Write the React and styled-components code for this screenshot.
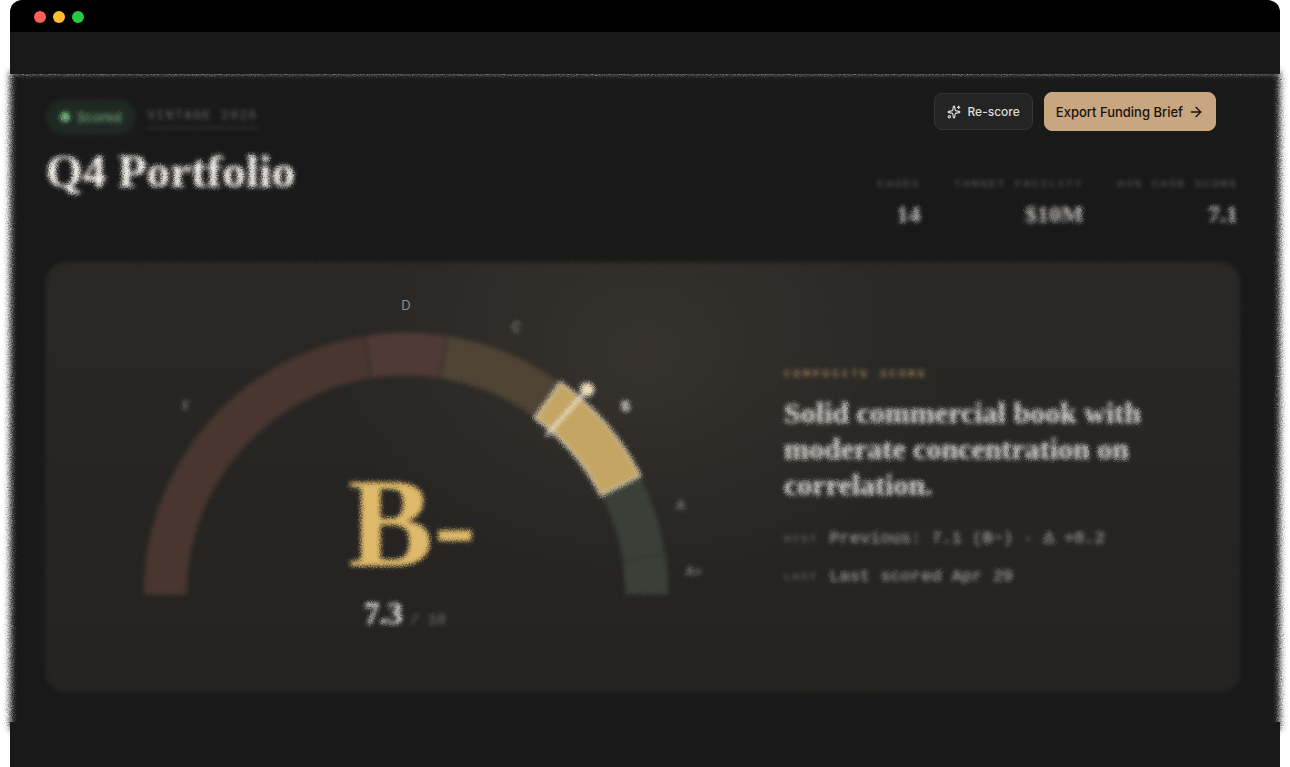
import React from "react";
import styled, { createGlobalStyle } from "styled-components";
import { ArrowRight, Sparkles } from "lucide-react";

const serif = '"Liberation Serif", serif';
const mono = '"Liberation Mono", monospace';
const sans = 'Inter, "Liberation Sans", sans-serif';

const GlobalStyle = createGlobalStyle`
  *, *::before, *::after { box-sizing: border-box; }
  body { margin: 0; background: #fff; font-family: ${sans}; }
  h1, h2, p, dl, dd, dt { margin: 0; }
`;

const Frame = styled.div`
  display: flex;
  flex-direction: column;
  min-height: 100vh;
  margin: 0 10px;
`;

const TitleBar = styled.header`
  display: flex;
  align-items: center;
  gap: 7px;
  height: 32px;
  padding: 2px 24px 0;
  border-radius: 12px 12px 0 0;
  background: #000;
`;

const Light = styled.span`
  width: 12px;
  height: 12px;
  border-radius: 50%;
  background: ${(p) => p.$color};
`;

const Strip = styled.div`
  position: relative;
  z-index: 1;
  height: 42px;
  background: #191919;
`;

const Foot = styled(Strip)`
  flex: 1;
  min-height: 44px;
`;

const Sheet = styled.main`
  position: relative;
  padding: 18px 40px 30px 36px;

  &::before {
    content: "";
    position: absolute;
    inset: -2px 0 -8px;
    background: #191919;
    filter: url(#haze);
  }
`;

const SheetHead = styled.div`
  position: relative;
  display: flex;
  justify-content: space-between;
  height: 170px;
`;

const HeadLeft = styled.div`
  padding-top: 7px;
  filter: url(#scatter);
`;

const TagRow = styled.div`
  display: flex;
  align-items: center;
  gap: 12px;
`;

const Pill = styled.span`
  display: flex;
  align-items: center;
  gap: 7px;
  height: 36px;
  padding: 0 14px;
  border-radius: 18px;
  background: #202823;
  color: #6a9b71;
  font-size: 13px;
  font-weight: 600;

  &::before {
    content: "";
    width: 10px;
    height: 10px;
    border-radius: 50%;
    background: #71b57e;
  }
`;

const Vintage = styled.span`
  border-bottom: 2px dotted #4f4e4d;
  color: #72716f;
  font: 12px/22px ${mono};
  letter-spacing: 2px;
`;

const Title = styled.h1`
  margin-top: 8px;
  color: #faf6f2;
  font: bold 47px/56px ${serif};
`;

const HeadRight = styled.div`
  display: flex;
  flex-direction: column;
  align-items: flex-end;
  justify-content: space-between;
  padding-bottom: 34px;
`;

const Actions = styled.div`
  display: flex;
  align-items: center;
  gap: 11px;
  padding-right: 24px;
`;

const Button = styled.button`
  display: flex;
  align-items: center;
  gap: ${(p) => (p.$primary ? 5 : 6)}px;
  height: ${(p) => (p.$primary ? 39 : 37)}px;
  padding: 0 ${(p) => (p.$primary ? 11 : 12)}px;
  border: 1px solid ${(p) => (p.$primary ? "#c7a680" : "#343434")};
  border-radius: 8px;
  background: ${(p) => (p.$primary ? "#c7a680" : "#242424")};
  color: ${(p) => (p.$primary ? "#17130f" : "#dedbd6")};
  font: 500 ${(p) => (p.$primary ? 13 : 12)}px ${sans};
`;

const Metrics = styled.dl`
  display: flex;
  gap: 34px;
  padding-right: 2px;
  filter: url(#scatter);
`;

const Metric = styled.div`
  text-align: right;

  dt {
    color: #6b6a68;
    font: 11px/16px ${mono};
    letter-spacing: 2px;
  }
  dd {
    margin-top: 8px;
    color: #c9c6c3;
    font: bold 24px/28px ${serif};
  }
`;

const Card = styled.section`
  position: relative;
  display: grid;
  grid-template-columns: 738px minmax(0, 1fr);
  align-items: center;
  min-height: 430px;

  &::before {
    content: "";
    position: absolute;
    inset: 0;
    border: 1px solid #2f2d29;
    border-radius: 20px;
    background:
      radial-gradient(ellipse 300px 230px at 50% 22%, rgba(199, 160, 120, 0.09), transparent),
      linear-gradient(#292826, #242321);
    filter: url(#scatter);
  }
`;

const Gauge = styled.svg`
  position: relative;
  display: block;
  width: 100%;
  height: 430px;
`;

const Summary = styled.div`
  position: relative;
  padding: 0 60px 0 0;
  filter: url(#scatter);
`;

const Eyebrow = styled.p`
  color: #cba66b;
  font: 11px/16px ${mono};
  letter-spacing: 3px;
`;

const Headline = styled.h2`
  max-width: 380px;
  margin: 13px 0 24px;
  color: #e6e2de;
  font: bold 30px/36px ${serif};
`;

const Note = styled.p`
  display: flex;
  align-items: center;
  gap: 11px;
  color: #b5b2ae;
  font: 17px/24px ${mono};

  & + & { margin-top: 14px; }
`;

const NoteTag = styled.span`
  color: #7b7875;
  font-size: 11px;
  letter-spacing: 2px;
`;

const CX = 360;
const CY = 333;
const OUTER = 263;
const INNER = 219;

const at = (score, radius) => {
  const angle = Math.PI * (1 - score / 10);
  return [CX + radius * Math.cos(angle), CY - radius * Math.sin(angle)];
};

const arc = (from, to) =>
  `M${at(from, OUTER)} A${OUTER} ${OUTER} 0 0 1 ${at(to, OUTER)} L${at(to, INNER)} A${INNER} ${INNER} 0 0 0 ${at(from, INNER)}Z`;

const bands = [
  { grade: "F", from: 0, to: 4.5, fill: "#48362f" },
  { grade: "D", from: 4.5, to: 5.5, fill: "#4f3a38" },
  { grade: "C", from: 5.5, to: 7, fill: "#4e4334" },
  { grade: "A", from: 8.5, to: 9.5, fill: "#3a4038" },
  { grade: "A+", from: 9.5, to: 10, fill: "#3a4038" },
  { grade: "B", from: 7, to: 8.5, fill: "#c4a564", active: true },
];

function GradeLabel({ band }) {
  const [x, y] = at((band.from + band.to) / 2, 289);
  const plain = band.grade === "D";
  return (
    <text
      x={x}
      y={y + 4}
      textAnchor="middle"
      fontSize="13"
      fontFamily={sans}
      fontWeight={band.active ? 700 : 400}
      fill={band.active ? "#ffffff" : plain ? "#8b8b8a" : "#a09c98"}
      filter={plain ? undefined : "url(#scatter)"}
    >
      {band.grade}
    </text>
  );
}

function ScoreGauge() {
  const [x1, y1] = at(7.3, 212);
  const [x2, y2] = at(7.3, 274);
  return (
    <Gauge viewBox="0 0 738 430" role="img" aria-label="Composite score gauge">
      <g filter="url(#scatter)">
        {bands.map((b) => (
          <path
            key={b.grade}
            d={arc(b.from, b.to)}
            fill={b.fill}
            stroke={b.active ? "#e6dfd0" : "#292724"}
            strokeWidth={b.active ? 2 : 1}
          />
        ))}
        <line x1={x1} y1={y1} x2={x2} y2={y2} stroke="#f1eade" strokeWidth="3" />
        <circle cx={x2} cy={y2} r="6" fill="#f0d7a8" stroke="#f5efe6" strokeWidth="2" />
        <text x="302" y="304" fontFamily={serif} fontWeight="bold" fontSize="128" fill="#dfba6b">B-</text>
        <text x="318" y="362" fontFamily={serif} fontWeight="bold" fontSize="31" fill="#f6f2ee">7.3</text>
        <text x="364" y="362" fontFamily={mono} fontSize="15" fill="#7b7875">/ 10</text>
      </g>
      {bands.map((b) => <GradeLabel key={b.grade} band={b} />)}
    </Gauge>
  );
}

function Softener({ id, blur, scale }) {
  return (
    <filter id={id} x="-20" y="-20" width="1400" height="800" filterUnits="userSpaceOnUse" colorInterpolationFilters="sRGB">
      <feGaussianBlur in="SourceGraphic" stdDeviation={blur} result="soft" />
      <feTurbulence type="fractalNoise" baseFrequency="0.9" numOctaves="2" result="noise" />
      <feDisplacementMap in="soft" in2="noise" scale={scale} xChannelSelector="R" yChannelSelector="G" />
    </filter>
  );
}

const FilterDefs = styled.svg`
  position: absolute;
  width: 0;
  height: 0;
`;

export default function App() {
  return (
    <>
      <GlobalStyle />
      <FilterDefs aria-hidden="true">
        <Softener id="scatter" blur="2" scale="6" />
        <Softener id="haze" blur="3" scale="7" />
      </FilterDefs>
      <Frame>
        <TitleBar>
          <Light $color="#ff5f57" />
          <Light $color="#febc2e" />
          <Light $color="#28c840" />
        </TitleBar>
        <Strip />
        <Sheet>
          <SheetHead>
            <HeadLeft>
              <TagRow>
                <Pill>Scored</Pill>
                <Vintage>VINTAGE 2026</Vintage>
              </TagRow>
              <Title>Q4 Portfolio</Title>
            </HeadLeft>
            <HeadRight>
              <Actions>
                <Button type="button"><Sparkles size={14} />Re-score</Button>
                <Button type="button" $primary>Export Funding Brief<ArrowRight size={16} /></Button>
              </Actions>
              <Metrics>
                <Metric><dt>CASES</dt><dd>14</dd></Metric>
                <Metric><dt>TARGET FACILITY</dt><dd>$10M</dd></Metric>
                <Metric><dt>AVG CASE SCORE</dt><dd>7.1</dd></Metric>
              </Metrics>
            </HeadRight>
          </SheetHead>
          <Card>
            <ScoreGauge />
            <Summary>
              <Eyebrow>COMPOSITE SCORE</Eyebrow>
              <Headline>Solid commercial book with moderate concentration on correlation.</Headline>
              <Note><NoteTag>HIST</NoteTag>Previous: 7.1 (B−) · Δ +0.2</Note>
              <Note><NoteTag>LAST</NoteTag>Last scored Apr 29</Note>
            </Summary>
          </Card>
        </Sheet>
        <Foot />
      </Frame>
    </>
  );
}
